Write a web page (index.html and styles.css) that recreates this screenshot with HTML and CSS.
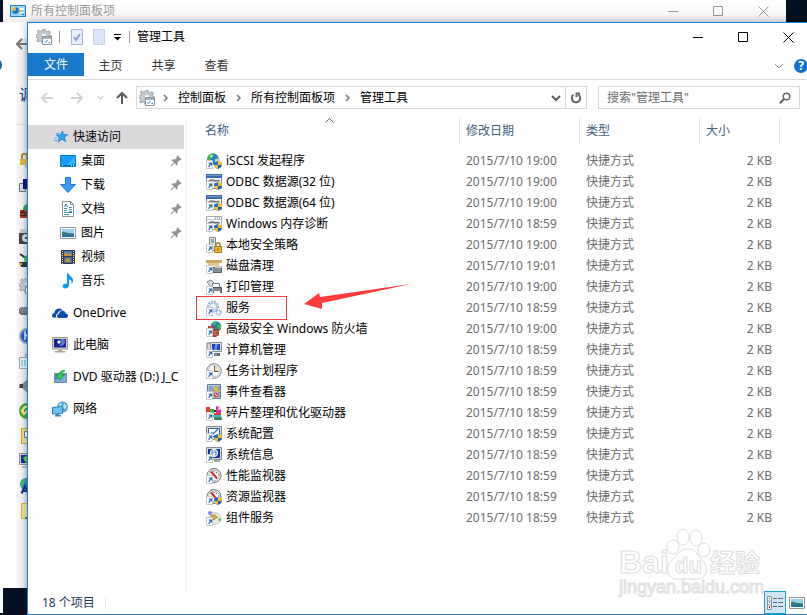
FILE: index.html
```
<!DOCTYPE html>
<html lang="zh-CN">
<head>
    <meta charset="UTF-8">
    <title>管理工具</title>
    <link rel="stylesheet" href="styles.css">
</head>
<body>
<svg class="symbols" aria-hidden="true">
    <!-- overlays -->
    <symbol id="link" viewBox="0 0 16 16">
        <path d="M.5 7.500h6v8h-6z" fill="#fff" stroke="#c4c8cc"/>
        <path d="M2.500 9.500H6V13l-1.200-1.200-1.600 2.400-1-.7 1.600-2.500z" fill="#2a6cb8"/>
    </symbol>
    <symbol id="shield" viewBox="0 0 16 16">
        <path d="M8 9.500 12 8v8C9.500 15 8 13.500 8 11z" fill="#2a72c8"/>
        <path d="M12 8l4 1.500V12h-4z" fill="#f3bd2c"/>
        <path d="M8.100 12H12v4C10 15.200 8.500 14 8.100 12z" fill="#f3bd2c"/>
        <path d="M12 12h3.900c-.4 2-1.900 3.200-3.900 4z" fill="#1f5da8"/>
    </symbol>
    <!-- window icons -->
    <symbol id="tools" viewBox="0 0 16 16">
        <path d="M7 0h2l.5 2.400 1.500.7 2-1.500 1.500 1.500-1.300 2L13.800 6.500 16 7v2H9v5l-3 .5-.5-2-1.500-.7-2 1.300L.7 11.700 2 9.700 1.500 8.500-.5 8V6l2.300-.5.7-1.300L1.200 2.200 2.700.9l2 1.300 1.600-.6z" fill="#c3cad0" stroke="#8c959c" stroke-width=".8"/>
        <circle cx="8" cy="7" r="2" fill="#fff"/>
        <path d="M6.500 7.500h9v8h-9z" fill="#fff" stroke="#8b959d"/>
        <path d="M7 8h8v2H7z" fill="#aab3ba"/>
        <path d="M8.500 12.500l1 1 2-2.500M12.500 13.500h1.500" fill="none" stroke="#2c8fe0"/>
    </symbol>
    <symbol id="panel" viewBox="0 0 16 16">
        <path d="M.5 2.500h15v11H.5z" fill="#9bd6f8" stroke="#1b80bc"/>
        <circle cx="5.500" cy="7.500" r="3.500" fill="#fff"/>
        <path d="M5.500 7.500V4a3.500 3.500 0 1 1-3.500 3.500z" fill="#1a78c4"/>
        <path d="M5.500 7.500V4A3.500 3.500 0 0 0 2 7.500z" fill="#f4a21d"/>
        <path d="M10 5h4v2h-4zM10 9h4v1h-4z" fill="#fff"/>
        <path d="M10 7h2v2h-2z" fill="#f4a21d"/>
        <path d="M12 11h2v1h-2zM3 12h5" fill="#1b80bc"/>
    </symbol>
    <!-- navigation -->
    <symbol id="star" viewBox="0 0 16 16">
        <path d="M9.500 2l1.200 3.700 4 .1-3.200 2.500 1 4.200-3.500-2.300L5 13l1.300-4.500L3.500 6l4-.3z" fill="#2da7f2" stroke="#1b7dcb" stroke-width=".8"/>
        <path d="M3 4.500h3M1.500 9h3M1 11.500h3" stroke="#4fa7e8"/>
    </symbol>
    <symbol id="desktop" viewBox="0 0 16 16">
        <path d="M.5 2.500h15v11H.5z" fill="#10a0fa" stroke="#0c7cd2"/>
        <path d="M15 3v7L6 13z" fill="#37b3ff"/>
        <path d="M1 12h14v1H1z" fill="#0863b4"/>
        <path d="M2 12h1v1H2zM11 12h1v1h-1zM13 12h1v1h-1z" fill="#fff"/>
    </symbol>
    <symbol id="download" viewBox="0 0 16 16">
        <path d="M5.500.5h5v7h5L8 15.500.5 7.500h5z" fill="#3b9af0" stroke="#2379cf"/>
    </symbol>
    <symbol id="document" viewBox="0 0 16 16">
        <path d="M2.500.5h8l3 3v12h-11z" fill="#fff" stroke="#8a9299"/>
        <path d="M10.500.5v3h3" fill="none" stroke="#8a9299"/>
        <path d="M4 7.500h3M4 9.500h3M4 11.500h8M4 13.500h5M9 6.500h3M9 8.500h3M9 10.500h3" stroke="#3c94cf"/>
        <path d="M4.500 6L6 3l1.500 3" fill="none" stroke="#2a7fc0"/>
    </symbol>
    <symbol id="picture" viewBox="0 0 16 16">
        <path d="M.5 2.500h15v11H.5z" fill="#fff" stroke="#8f979e"/>
        <path d="M2 4h12v8H2z" fill="#9dd0ef"/>
        <path d="M2 7c3-1 4 1 7 1s4 1 5 0v4H2z" fill="#3a7d78"/>
        <path d="M2 10l12-1v3H2z" fill="#2c6fa8"/>
    </symbol>
    <symbol id="video" viewBox="0 0 16 16">
        <path d="M1 1h14v14H1z" fill="#36393d"/>
        <path d="M2.500 2v13M13.500 2v13" stroke="#e8e8e8" stroke-dasharray="1 1"/>
        <path d="M4 2h8v5H4z" fill="#3d7ec4"/>
        <path d="M4 8h8v6H4z" fill="#3a6cb0"/>
        <path d="M4 5l2-2 2 2 2-1 2 3H4zM5 10l4-1 2 4H5z" fill="#c89334"/>
    </symbol>
    <symbol id="music" viewBox="0 0 16 16">
        <path d="M7 .5h2c0 3 4 3.500 4 7 0 1.500-.6 2.500-1.500 3.500.8-3-.5-4-2.500-4.500V12c0 2-1.500 3.500-3.500 3.500S2.500 14.500 2.500 13 4 10.500 7 10.500z" fill="#0e9bf5"/>
    </symbol>
    <symbol id="onedrive" viewBox="0 0 16 16">
        <path d="M4.500 12.500C1 13 0 12 0 10.500S1 8 2.500 8c0-3 2-4.500 4.500-4.500 1.700 0 3 .8 3.800 2C7 5 6 7 5.800 8.300 4 9 3.500 10.700 4.500 12.500z" fill="#0c4ca8"/>
        <path d="M5 11c0-1.300 1-2.200 2-2.300.3-2 1.700-3 3.500-3 1.700 0 2.900 1.100 3.200 2.700 1.500.1 2.300 1 2.300 2.300S15 13 13.800 13H7c-1.300 0-2-.9-2-2z" fill="#0c4cb2"/>
    </symbol>
    <symbol id="pc" viewBox="0 0 16 16">
        <path d="M.5.500h15v11.500H.5z" fill="#d9d6cf" stroke="#99968f"/>
        <path d="M2 2h12v8.500H2z" fill="#101c93"/>
        <path d="M8 2h4c2 2 1 6-2 7H6c4-1 4-5 2-7z" fill="#5878dc"/>
        <circle cx="7" cy="5" r="1.700" fill="#e8efff"/>
        <path d="M6 12.500h4V14h3v1.500H3V14h3z" fill="#aaa69e"/>
    </symbol>
    <symbol id="dvd" viewBox="0 0 16 16">
        <path d="M2.500 4.500h12v9h-12z" fill="#4a8ccd" stroke="#7b8b9a"/>
        <path d="M3 11l11-5v7H3z" fill="#78afdf"/>
        <path d="M12.500 1.500C9 1.500 7 3 6.500 6H4l4 5 4-5H9.500c0-2 1-3 3-3.500z" fill="#2ed651" stroke="#139332" stroke-width=".7"/>
    </symbol>
    <symbol id="network" viewBox="0 0 16 16">
        <circle cx="10.500" cy="6" r="5.500" fill="#4d9fd4"/>
        <path d="M7 3c2-2 3-1 3 1L7 6zM12 2l3 3-2 4-2-3z" fill="#b8def2"/>
        <path d="M.5 6.500l10-1v7l-10 .5z" fill="#68c3f4" stroke="#2e81b7"/>
        <path d="M4 13h3v1h2v1.500H3V14h1z" fill="#3a88b8"/>
    </symbol>
    <symbol id="pin" viewBox="0 0 12 12">
        <path d="M7.500.5l4 4-1 1-1-.3-2 2 .3 2.300-1 1L4.500 8.200 1.200 11.500.5 10.800 3.800 7.500 1.500 5.200l1-1 2.300.3 2-2-.3-1z" fill="#8a979f"/>
    </symbol>
    <!-- files -->
    <symbol id="iscsi" viewBox="0 0 16 16">
        <circle cx="7" cy="6" r="5.700" fill="#267fc4"/>
        <path d="M3 2c3-2 5-1 5 1L5 6l-3 3C.5 6 1 4 3 2zM10 4l2 1-1 4-3 1z" fill="#43b651"/>
        <path d="M4 2.500l2-1 1 2-2 1.500z" fill="#c5f3cf"/>
        <path d="M9 6h5v3H9z" fill="#c8d0d6"/>
        <use href="#link"/><use href="#shield"/>
    </symbol>
    <symbol id="odbc" viewBox="0 0 16 16">
        <path d="M.5.5h15v14H.5z" fill="#f4f5f5" stroke="#7b8798"/>
        <path d="M0 0h16v4H0z" fill="#3c68ae"/>
        <path d="M1 1h14v1H1z" fill="#7498cf"/>
        <path d="M2.500 7.500C4 6 6 5.500 8 6.500s4-1 5.500 1" fill="none" stroke="#6d7277" stroke-width="1.500"/>
        <use href="#link"/><use href="#shield"/>
    </symbol>
    <symbol id="memory" viewBox="0 0 16 16">
        <path d="M.5.5h15v13H.5z" fill="#fbfbfb" stroke="#a9adb1"/>
        <path d="M1 3.500h14" stroke="#c3c8ce"/>
        <path d="M9 2h1M11 2h1M13 2h1" stroke="#3b78bd"/>
        <path d="M2.500 7.500C4 6 6 5.500 8 6.500s4-1 5.500 1" fill="none" stroke="#5d6267" stroke-width="1.500"/>
        <use href="#link"/><use href="#shield"/>
    </symbol>
    <symbol id="policy" viewBox="0 0 16 16">
        <path d="M3.500.5h6v13h-6z" fill="#dde2e6" stroke="#7c868e"/>
        <path d="M5 3h3M5 5h3" stroke="#596269"/>
        <path d="M10 10V8c0-3 4-3 4 0v2" fill="none" stroke="#9a8a4b" stroke-width="1.500"/>
        <path d="M8.500 9.500h7v6h-7z" fill="#e9b83c" stroke="#a57a14"/>
        <path d="M12 11v3" stroke="#7e5c0e"/>
        <use href="#link"/>
    </symbol>
    <symbol id="cleanup" viewBox="0 0 16 16">
        <path d="M0 2h16v3H0z" fill="#c9ab67"/>
        <path d="M2 5h11v3H2z" fill="#e0c88f"/>
        <path d="M5 9.500h10.500v5H5z" fill="#888f94" stroke="#555b60"/>
        <path d="M9 8h7v2H9z" fill="#c3c8cb"/>
        <path d="M13 12h1v1h-1z" fill="#4be05c"/>
        <use href="#link"/>
    </symbol>
    <symbol id="print" viewBox="0 0 16 16">
        <path d="M1 3l4-2 4 4-4 3z" fill="#d9dde0" stroke="#7a8186"/>
        <path d="M6.500 4.500h7v4h-7z" fill="#fff" stroke="#777d82"/>
        <path d="M4.500 8.500h11v5h-11z" fill="#7f868c" stroke="#4b5055"/>
        <path d="M8 12h6v3H8z" fill="#f1f2f3"/>
        <use href="#link"/>
    </symbol>
    <symbol id="gears" viewBox="0 0 16 16">
        <circle cx="7" cy="6.500" r="5" fill="#eef5fa" stroke="#9db7c9" stroke-width="2" stroke-dasharray="2 1"/>
        <circle cx="7" cy="6.500" r="3.500" fill="none" stroke="#a5c4d9"/>
        <circle cx="12.500" cy="12.500" r="2.500" fill="#e4f2fb" stroke="#64a1c9" stroke-width="1.500" stroke-dasharray="1 1"/>
        <use href="#link"/>
    </symbol>
    <symbol id="firewall" viewBox="0 0 16 16">
        <circle cx="10" cy="5.500" r="5.300" fill="#287ac0"/>
        <path d="M7 1c3-1 4 0 3 2L7 5zM11 4l4-1v4l-3 2z" fill="#46b554"/>
        <path d="M2 5h6v3h5v6l-3 2H2z" fill="#a5432c"/>
        <path d="M2 7.500h6M2 10.500h11M8 13.500h4M5 5v2M9 11v3" stroke="#d99076" stroke-width=".7"/>
        <use href="#link"/>
    </symbol>
    <symbol id="computer" viewBox="0 0 16 16">
        <path d="M1 1h4v9H1z" fill="#d4d8db" stroke="#7c858d"/>
        <path d="M4.500.5h11v9h-11z" fill="#dce0e2" stroke="#858e95"/>
        <path d="M6 2h8v6H6z" fill="#1c3fb5"/>
        <path d="M9 2h3l-1 6H8z" fill="#6188e4"/>
        <path d="M8 11h6v3H8z" fill="#606970"/>
        <path d="M10 10v5" stroke="#c7ccd0"/>
        <use href="#link"/>
    </symbol>
    <symbol id="clock" viewBox="0 0 16 16">
        <circle cx="8" cy="8" r="7.300" fill="#e9eef2" stroke="#858d94"/>
        <circle cx="8" cy="8" r="5.700" fill="#fff" stroke="#c6ced4"/>
        <path d="M8 8V2.500A5.500 5.500 0 0 1 13.500 8z" fill="#f4dda2"/>
        <path d="M8.500 3v5.500h4" fill="none" stroke="#4c5a66"/>
        <use href="#link"/>
    </symbol>
    <symbol id="events" viewBox="0 0 16 16">
        <path d="M1.500.5h13v14h-13z" fill="#b6c9df" stroke="#5f7ba3"/>
        <path d="M3 3h4M3 5h4M3 7h4M12 3h2M12 5h2M12 9h2M12 12h2" stroke="#5279ad"/>
        <path d="M10 2l3 5H7z" fill="#f5c832" stroke="#a78113" stroke-width=".7"/>
        <circle cx="10" cy="11" r="2.500" fill="#df4a4a"/>
        <path d="M9 10l2 2" stroke="#fff"/>
        <use href="#link"/>
    </symbol>
    <symbol id="defrag" viewBox="0 0 16 16">
        <path d="M0 2h4v5H0z" fill="#d74545"/>
        <path d="M4 4h4v4H4z" fill="#41a94a"/>
        <path d="M8 5h4v2H8z" fill="#37312f"/>
        <path d="M10 1l3 1-1 3 3-1v4h-5z" fill="#d631bd"/>
        <path d="M8 8h7v2H8z" fill="#d9433b"/>
        <path d="M7 10h8v2H7z" fill="#3caed1"/>
        <path d="M8 12h8v3H8z" fill="#39a946"/>
        <path d="M9 14h6" stroke="#5d35a3"/>
        <use href="#link"/>
    </symbol>
    <symbol id="config" viewBox="0 0 16 16">
        <path d="M.5.500h15v13H.5z" fill="#d9dcdf" stroke="#858b91"/>
        <path d="M2.500 2.500h11v8h-11z" fill="#fff" stroke="#3157a7"/>
        <path d="M5 6l2 2 5-5" fill="none" stroke="#3a80d0" stroke-width="1.500"/>
        <use href="#link"/><use href="#shield"/>
    </symbol>
    <symbol id="info" viewBox="0 0 16 16">
        <path d="M.5.500h15v12H.5z" fill="#d9dcdf" stroke="#858b91"/>
        <path d="M2 2h12v9H2z" fill="#19349d"/>
        <circle cx="8" cy="6" r="3.700" fill="#7da7ea" stroke="#fff"/>
        <path d="M8 3.500v1M8 5.500v3.500" stroke="#fff" stroke-width="1.500"/>
        <path d="M8 13h6v2H8z" fill="#a6abaf"/>
        <use href="#link"/>
    </symbol>
    <symbol id="gauge" viewBox="0 0 16 16">
        <circle cx="8" cy="7.500" r="7" fill="#e6e6e6" stroke="#777"/>
        <circle cx="8" cy="7.500" r="5.200" fill="#fff" stroke="#bbb"/>
        <path d="M5 3.500l6 7" stroke="#d32b2b" stroke-width="2"/>
        <path d="M8 3v1M12 7h1M11 4l-1 1" stroke="#666"/>
        <use href="#link"/>
    </symbol>
    <symbol id="component" viewBox="0 0 16 16">
        <path d="M4 4c4-3 11-1 11 5 0 4-5 6-10 5z" fill="#e7e9e7" stroke="#c3c9c6"/>
        <circle cx="4" cy="3" r="2" fill="#8b82dc"/>
        <circle cx="13.500" cy="9.500" r="1.500" fill="#6bbf5e"/>
        <path d="M5 6c2-2 6-1 6 2H9L8 10 6 9z" fill="#e2b02c" stroke="#846d23" stroke-width=".7"/>
        <use href="#link"/>
    </symbol>
    <!-- chrome glyphs -->
    <symbol id="min" viewBox="0 0 11 11"><path d="M0 5.500h10" stroke="currentColor"/></symbol>
    <symbol id="max" viewBox="0 0 11 11"><path d="M.5.500h9v9h-9z" fill="none" stroke="currentColor"/></symbol>
    <symbol id="close" viewBox="0 0 11 11"><path d="M.5.500l10 10M10.500.5l-10 10" stroke="currentColor"/></symbol>
    <symbol id="arrow" viewBox="0 0 12 12"><path d="M12 6H1M6 1L1 6l5 5" fill="none" stroke="currentColor" stroke-width="2"/></symbol>
    <symbol id="chev" viewBox="0 0 10 10"><path d="M1 3l4 4 4-4" fill="none" stroke="currentColor" stroke-width="2"/></symbol>
    <symbol id="sep" viewBox="0 0 6 10"><path d="M1 2l3 3-3 3" fill="none" stroke="#767676" stroke-width="1.500"/></symbol>
</svg>

<div class="desktop">
    <div class="far-window"><i></i></div>

    <!-- 所有控制面板项 -->
    <div class="back-window">
        <div class="back-title">
            <svg class="icon"><use href="#panel"/></svg>
            <span>所有控制面板项</span>
            <div class="captions">
                <button aria-label="最小化"><svg><use href="#min"/></svg></button>
                <button aria-label="最大化"><svg><use href="#max"/></svg></button>
                <button aria-label="关闭"><svg><use href="#close"/></svg></button>
            </div>
        </div>
        <div class="back-side">
            <svg class="back-arrow"><use href="#arrow"/></svg>
            <div class="adjust">调</div>
            <div class="back-icons">
                <svg viewBox="0 0 16 16"><path d="M3 6V3c0-3 5-3 5 0v3" fill="none" stroke="#a58a38" stroke-width="2"/><path d="M1 6h9v6H1z" fill="#e2b643"/><circle cx="9" cy="12" r="3" fill="#b3b9be"/></svg>
                <svg viewBox="0 0 16 16"><path d="M.5 5.500h6v8h-6z" fill="#d7dade" stroke="#6c737a"/><path d="M4 1h12v10H4z" fill="#10178e"/></svg>
                <svg viewBox="0 0 16 16"><circle cx="9" cy="6" r="5" fill="#33a35c"/><path d="M1 7h12v8H1z" fill="#a4412d"/><path d="M1 9.500h12M1 12.500h12M4 7v2M6 10v2" stroke="#5d1f16"/></svg>
                <svg viewBox="0 0 16 16"><path d="M1 1h14v4H1z" fill="#c5c9ca"/><path d="M0 5h16v11H0z" fill="#414748"/><circle cx="7" cy="10" r="4" fill="#d5dbdc"/><circle cx="7" cy="10" r="1" fill="#222"/></svg>
                <svg viewBox="0 0 16 16"><path d="M1 1l7 5" stroke="#333" stroke-width="2"/><circle cx="9" cy="6" r="4" fill="#48b857"/><path d="M0 9h10v5H2z" fill="#313a36"/><path d="M0 11h3" stroke="#d8b33c" stroke-width="2"/></svg>
                <svg viewBox="0 0 16 16"><use href="#tools"/></svg>
                <svg viewBox="0 0 16 16"><path d="M2 4h14v8H2L0 10V6z" fill="#6b727d"/><path d="M2 5h12M1 7h12M2 9h12" stroke="#b9bec8" stroke-dasharray="1 1"/></svg>
                <svg viewBox="0 0 16 16"><circle cx="8" cy="8" r="7" fill="#2b58b7" stroke="#8ea4cc" stroke-width="2"/><path d="M5 5l5 5M6 3v9" stroke="#dbe7fc" stroke-width="1.500"/></svg>
                <svg viewBox="0 0 16 16"><path d="M.5 4.500h15v11H.5z" fill="#e6f4fb" stroke="#93a7b4"/><path d="M2 8h12M2 10h12M2 12h12" stroke="#59a9cb" stroke-dasharray="2 1"/><path d="M6 1l5-1v5H6z" fill="#a6b2ba"/></svg>
                <svg viewBox="0 0 16 16"><path d="M0 6h3l7-6v16l-7-6H0z" fill="#8a9095"/><path d="M1 6h3v4H1z" fill="#3f4448"/></svg>
                <svg viewBox="0 0 16 16"><circle cx="8" cy="8" r="8" fill="#4aa62d"/><path d="M4 9c-1-5 4-7 7-4M2 7l3 4 3-3" fill="none" stroke="#f7e88b" stroke-width="2"/></svg>
                <svg viewBox="0 0 16 16"><path d="M2.500.5h13v15h-13z" fill="#f4dc8d" stroke="#d4a62c"/><path d="M5.500 3.500h6v6h-6z" fill="#fff" stroke="#667888"/></svg>
                <svg viewBox="0 0 16 16"><path d="M.5.500h15v11H.5z" fill="#d0d2d5" stroke="#8c9096"/><path d="M2 2h12v8H2z" fill="#102ba7"/><path d="M4 5c2-3 5-2 6 1l-3 4z" fill="#65d33a"/><path d="M3 13h9v2H3z" fill="#b6b9bd"/></svg>
                <svg viewBox="0 0 16 16"><circle cx="7" cy="6" r="6" fill="#3d8cc9"/><path d="M2 2l4-1-1 5-3 3z" fill="#4abb58"/><path d="M2.500 15.500L6 8l3 7.500M4 13h4" fill="none" stroke="#17308a" stroke-width="2"/></svg>
                <svg viewBox="0 0 16 16"><path d="M2.500.5h13v15h-13z" fill="#f7e197" stroke="#e2b42e"/><path d="M6 14h3v2H6z" fill="#2f87b2"/></svg>
            </div>
        </div>
    </div>

    <!-- 管理工具 -->
    <div class="window">
        <div class="title-bar">
            <svg class="icon"><use href="#tools"/></svg>
            <span class="bar"></span>
            <button class="quick" aria-label="属性"><svg viewBox="0 0 12 16"><path d="M.5.500h11v15H.5z" fill="#eaf0fb" stroke="#a9b6d3"/><path d="M3 8l2 3 4-6" fill="none" stroke="#8aa0cd" stroke-width="2"/></svg></button>
            <button class="quick" aria-label="新建文件夹"><svg viewBox="0 0 12 16"><path d="M.5.500h11v15H.5z" fill="#dbe5f7" stroke="#c9d6ee"/><path d="M9.500 10.500h2v5h-2z" fill="#eaf0fb" stroke="#c9d6ee"/></svg></button>
            <button class="more" aria-label="自定义快速访问工具栏"><svg viewBox="0 0 7 7"><path d="M0 .5h7" stroke="#000"/><path d="M0 3h7L3.500 6.500z"/></svg></button>
            <span class="bar"></span>
            <span class="title">管理工具</span>
            <div class="captions">
                <button aria-label="最小化"><svg><use href="#min"/></svg></button>
                <button aria-label="最大化"><svg><use href="#max"/></svg></button>
                <button aria-label="关闭"><svg><use href="#close"/></svg></button>
            </div>
        </div>

        <div class="tabs">
            <button class="file">文件</button>
            <button>主页</button>
            <button>共享</button>
            <button>查看</button>
            <div class="ribbon-end">
                <svg class="expand" viewBox="0 0 10 10"><path d="M1 3l4 4 4-4" fill="none" stroke="currentColor"/></svg>
                <span class="help">?</span>
            </div>
        </div>

        <div class="toolbar">
            <button class="step dim" aria-label="后退"><svg><use href="#arrow"/></svg></button>
            <button class="step dim next" aria-label="前进"><svg><use href="#arrow"/></svg></button>
            <button class="recent dim" aria-label="最近浏览的位置"><svg><use href="#chev"/></svg></button>
            <button class="step up" aria-label="上移"><svg><use href="#arrow"/></svg></button>
            <div class="address">
                <svg class="icon"><use href="#tools"/></svg>
                <svg class="sep"><use href="#sep"/></svg>
                <a href="#">控制面板</a>
                <svg class="sep"><use href="#sep"/></svg>
                <a href="#">所有控制面板项</a>
                <svg class="sep"><use href="#sep"/></svg>
                <a href="#">管理工具</a>
                <button class="history" aria-label="以前的位置"><svg><use href="#chev"/></svg></button>
                <button class="refresh" aria-label="刷新"><svg viewBox="0 0 12 12"><path d="M8.500 2.800A4.200 4.200 0 1 1 3.500 2.800M2 1.500h3.500V5" fill="none" stroke="#666" stroke-width="2"/></svg></button>
            </div>
            <div class="search">
                <input type="text" aria-label="搜索" placeholder='搜索"管理工具"'>
                <svg viewBox="0 0 12 12"><circle cx="7.500" cy="4.500" r="3.300" fill="none" stroke="#666" stroke-width="1.500"/><path d="M5 7L.8 11.200" stroke="#666" stroke-width="2"/></svg>
            </div>
        </div>

        <div class="content">
            <nav>
                <a href="#" class="root selected"><svg class="icon"><use href="#star"/></svg>快速访问</a>
                <a href="#" class="child"><svg class="icon"><use href="#desktop"/></svg>桌面<svg class="pin"><use href="#pin"/></svg></a>
                <a href="#" class="child"><svg class="icon"><use href="#download"/></svg>下载<svg class="pin"><use href="#pin"/></svg></a>
                <a href="#" class="child"><svg class="icon"><use href="#document"/></svg>文档<svg class="pin"><use href="#pin"/></svg></a>
                <a href="#" class="child"><svg class="icon"><use href="#picture"/></svg>图片<svg class="pin"><use href="#pin"/></svg></a>
                <a href="#" class="child"><svg class="icon"><use href="#video"/></svg>视频</a>
                <a href="#" class="child"><svg class="icon"><use href="#music"/></svg>音乐</a>
                <a href="#" class="root"><svg class="icon"><use href="#onedrive"/></svg>OneDrive</a>
                <a href="#" class="root"><svg class="icon"><use href="#pc"/></svg>此电脑</a>
                <a href="#" class="root"><svg class="icon"><use href="#dvd"/></svg>DVD 驱动器 (D:) J_C</a>
                <a href="#" class="root"><svg class="icon"><use href="#network"/></svg>网络</a>
            </nav>

            <div class="files">
                <table>
                    <thead>
                    <tr>
                        <th class="name"><div>名称<svg class="sort" viewBox="0 0 9 5"><path d="M.5 4.500l4-4 4 4" fill="none" stroke="#666"/></svg></div></th>
                        <th class="date"><div>修改日期</div></th>
                        <th class="type"><div>类型</div></th>
                        <th class="size"><div>大小</div></th>
                    </tr>
                    </thead>
                    <tbody>
                    <tr><td><svg class="icon"><use href="#iscsi"/></svg>iSCSI 发起程序</td><td>2015/7/10 19:00</td><td>快捷方式</td><td>2 KB</td></tr>
                    <tr><td><svg class="icon"><use href="#odbc"/></svg>ODBC 数据源(32 位)</td><td>2015/7/10 19:00</td><td>快捷方式</td><td>2 KB</td></tr>
                    <tr><td><svg class="icon"><use href="#odbc"/></svg>ODBC 数据源(64 位)</td><td>2015/7/10 19:00</td><td>快捷方式</td><td>2 KB</td></tr>
                    <tr><td><svg class="icon"><use href="#memory"/></svg>Windows 内存诊断</td><td>2015/7/10 18:59</td><td>快捷方式</td><td>2 KB</td></tr>
                    <tr><td><svg class="icon"><use href="#policy"/></svg>本地安全策略</td><td>2015/7/10 19:00</td><td>快捷方式</td><td>2 KB</td></tr>
                    <tr><td><svg class="icon"><use href="#cleanup"/></svg>磁盘清理</td><td>2015/7/10 19:01</td><td>快捷方式</td><td>2 KB</td></tr>
                    <tr><td><svg class="icon"><use href="#print"/></svg>打印管理</td><td>2015/7/10 19:00</td><td>快捷方式</td><td>2 KB</td></tr>
                    <tr><td class="marked"><svg class="icon"><use href="#gears"/></svg>服务<span class="mark-box"></span><svg class="mark-arrow" viewBox="0 0 108 26"><path d="M0 20L15 9l1 4L107 0 18 19v6z" fill="#ff3b3b"/></svg></td><td>2015/7/10 18:59</td><td>快捷方式</td><td>2 KB</td></tr>
                    <tr><td><svg class="icon"><use href="#firewall"/></svg>高级安全 Windows 防火墙</td><td>2015/7/10 19:00</td><td>快捷方式</td><td>2 KB</td></tr>
                    <tr><td><svg class="icon"><use href="#computer"/></svg>计算机管理</td><td>2015/7/10 18:59</td><td>快捷方式</td><td>2 KB</td></tr>
                    <tr><td><svg class="icon"><use href="#clock"/></svg>任务计划程序</td><td>2015/7/10 18:59</td><td>快捷方式</td><td>2 KB</td></tr>
                    <tr><td><svg class="icon"><use href="#events"/></svg>事件查看器</td><td>2015/7/10 18:59</td><td>快捷方式</td><td>2 KB</td></tr>
                    <tr><td><svg class="icon"><use href="#defrag"/></svg>碎片整理和优化驱动器</td><td>2015/7/10 18:59</td><td>快捷方式</td><td>2 KB</td></tr>
                    <tr><td><svg class="icon"><use href="#config"/></svg>系统配置</td><td>2015/7/10 18:59</td><td>快捷方式</td><td>2 KB</td></tr>
                    <tr><td><svg class="icon"><use href="#info"/></svg>系统信息</td><td>2015/7/10 18:59</td><td>快捷方式</td><td>2 KB</td></tr>
                    <tr><td><svg class="icon"><use href="#gauge"/></svg>性能监视器</td><td>2015/7/10 18:59</td><td>快捷方式</td><td>2 KB</td></tr>
                    <tr><td><svg class="icon" viewBox="0 0 16 16"><use href="#gauge"/><use href="#shield"/></svg>资源监视器</td><td>2015/7/10 18:59</td><td>快捷方式</td><td>2 KB</td></tr>
                    <tr><td><svg class="icon"><use href="#component"/></svg>组件服务</td><td>2015/7/10 18:59</td><td>快捷方式</td><td>2 KB</td></tr>
                    </tbody>
                </table>
            </div>
        </div>

        <div class="status">
            <span class="count">18 个项目</span>
            <div class="views">
                <button class="on" aria-label="详细信息"><svg viewBox="0 0 16 14"><path d="M.5.500h4v13h-4zM.5 5h4M.5 9h4" fill="#fff" stroke="#8b9298"/><path d="M2 2h1v1H2z" fill="#2b9b46"/><path d="M2 6h1v1H2z" fill="#2b76d2"/><path d="M2 10h1v2H2z" fill="#d22"/><path d="M6 2.500h4M11 2.500h5M6 6.500h4M11 6.500h5M6 10.500h4M11 10.500h5" stroke="#5c666e"/></svg></button>
                <button aria-label="大图标"><svg viewBox="0 1 16 14"><use href="#picture" width="16" height="16"/></svg></button>
            </div>
        </div>
    </div>

    <!-- watermark -->
    <svg class="watermark" viewBox="0 0 148 74">
        <text class="big" x="1" y="45">Bai</text>
        <g class="paw">
            <ellipse cx="55" cy="19" rx="6" ry="7"/>
            <ellipse cx="65" cy="9" rx="6" ry="8"/>
            <ellipse cx="78" cy="10" rx="6" ry="8"/>
            <ellipse cx="86" cy="22" rx="6" ry="7"/>
            <path d="M70 21c9 0 9 7 14 11 6 5 7 18-4 19-7 1-13-1-20 0-11 1-13-12-7-18 6-5 8-12 17-12z"/>
        </g>
        <text class="du" x="57" y="45">du</text>
        <text class="cjk" x="92" y="44">经验</text>
        <text class="url" x="1" y="65">jingyan.baidu.com</text>
    </svg>
</div>
</body>
</html>
```
FILE: styles.css
```
* {
    box-sizing: border-box;
    margin: 0;
    padding: 0;
}
body {
    font: 12px/20px "Noto Sans", "Noto Sans CJK SC", sans-serif;
    color: #000;
    background: #04101f;
}
button {
    display: flex;
    align-items: center;
    justify-content: center;
    border: 0;
    background: none;
    font: inherit;
    color: inherit;
}
a {
    color: inherit;
    text-decoration: none;
}
.symbols {
    position: absolute;
    width: 0;
    height: 0;
}
.icon {
    flex: none;
    width: 16px;
    height: 16px;
}
.desktop {
    position: relative;
    min-height: 100vh;
    padding: 22px 0 0 27px;
    overflow: hidden;
    display: flex;
}

/* windows behind */
.far-window {
    position: absolute;
    left: 0;
    top: 22px;
    bottom: 2px;
    width: 3px;
    background: #fff;
    overflow: hidden;
}
.far-window i {
    display: block;
    width: 14px;
    height: 14px;
    margin: 36px 0 0 -12px;
    border-radius: 7px;
    background: #1566b0;
}
.back-window {
    position: absolute;
    left: 3px;
    right: 21px;
    top: 0;
    bottom: 27px;
    background: #fff;
    overflow: hidden;
}
.back-title {
    display: flex;
    align-items: center;
    height: 22px;
    padding-left: 7px;
    color: #999;
    background: linear-gradient(#fff 20%, #f2eff3);
}
.back-title span {
    margin-left: 5px;
}
.back-side {
    width: 24px;
    height: 100%;
    padding-left: 13px;
    background: linear-gradient(90deg, #fff 13px, #f7f5f8 14px, #f2f2f4 20px, #dcdcdf);
}
.back-arrow {
    display: block;
    width: 12px;
    height: 12px;
    margin-top: 16px;
    color: #777;
}
.adjust {
    width: 16px;
    height: 20px;
    margin: 34px 0 0 3px;
    font-size: 15px;
    color: #1c3b8e;
}
.back-icons {
    display: flex;
    flex-direction: column;
    gap: 9px;
    margin-top: 20px;
    padding: 28px 0 0 3px;
    border-top: 1px solid #dfe3ea;
}
.back-icons svg {
    width: 16px;
    height: 16px;
}

.captions {
    display: flex;
    align-self: stretch;
    margin-left: auto;
}
.captions button {
    width: 45px;
}
.captions svg {
    width: 11px;
    height: 11px;
}

/* main window */
.window {
    position: relative;
    flex: 1;
    min-width: 0;
    display: flex;
    flex-direction: column;
    border: 1px solid #1883d7;
    border-right: 0;
    background: #fff;
    overflow: hidden;
    box-shadow: 0 0 8px rgba(0, 0, 0, .3);
}
.title-bar {
    display: flex;
    align-items: center;
    height: 30px;
    padding: 0 0 2px 8px;
}
.title-bar .bar {
    width: 1px;
    height: 12px;
    margin-left: 7px;
    background: #999;
}
.quick {
    width: 12px;
    height: 16px;
    margin-left: 11px;
}
.quick svg {
    width: 12px;
    height: 16px;
}
.quick + .quick {
    margin-left: 10px;
}
.more {
    width: 7px;
    margin: 0 1px 0 9px;
}
.more svg {
    width: 7px;
    height: 7px;
}
.title {
    margin-left: 7px;
}
.title-bar .captions {
    margin-right: -4px;
}

.tabs {
    display: flex;
    height: 27px;
    border-bottom: 1px solid #dadbdc;
    color: #333;
}
.tabs button {
    width: 53px;
    height: 25px;
}
.tabs .file {
    width: 56px;
    height: 23px;
    background: #1979ca;
    color: #fff;
}
.ribbon-end {
    display: flex;
    align-items: center;
    gap: 10px;
    height: 25px;
    margin: 0 -1px 0 auto;
    color: #888;
}
.expand {
    width: 10px;
    height: 10px;
}
.help {
    width: 14px;
    height: 14px;
    border-radius: 7px;
    background: #0f74d1;
    color: #fff;
    font-weight: bold;
    line-height: 14px;
    text-align: center;
}

.toolbar {
    display: flex;
    padding: 6px 7px 8px 4px;
    color: #5c5c5c;
}
.step {
    width: 30px;
}
.step svg {
    width: 12px;
    height: 12px;
}
.dim {
    color: #d4d4d4;
}
.next svg {
    transform: rotate(180deg);
}
.recent {
    width: 16px;
}
.recent svg {
    width: 7px;
    height: 7px;
}
.up {
    width: 28px;
}
.up svg {
    transform: rotate(90deg);
}
.address,
.search {
    display: flex;
    align-items: center;
    height: 23px;
    border: 1px solid #d9d9d9;
}
.address {
    flex: 1;
    min-width: 0;
    padding-left: 2px;
    color: #000;
    white-space: nowrap;
}
.sep {
    width: 6px;
    height: 10px;
    margin: 0 9px 0 10px;
}
.address .icon + .sep {
    margin-left: 8px;
}
.history {
    width: 18px;
    margin-left: auto;
    color: #5c5c5c;
}
.history svg {
    width: 10px;
    height: 10px;
}
.refresh {
    align-self: stretch;
    width: 21px;
    border-left: 1px solid #d9d9d9;
}
.refresh svg {
    width: 12px;
    height: 12px;
    transform: scaleX(-1);
}
.search {
    width: 202px;
    margin-left: 11px;
    padding: 0 8px;
}
.search input {
    flex: 1;
    min-width: 0;
    border: 0;
    outline: 0;
    font: inherit;
}
.search input::placeholder {
    color: #6d6d6d;
}
.search svg {
    width: 12px;
    height: 12px;
}

.content {
    flex: 1;
    display: flex;
}
nav {
    width: 159px;
    padding: 8px 2px 0 0;
    border-right: 1px solid #f0f0f0;
}
nav a {
    display: flex;
    align-items: center;
    height: 24px;
    white-space: nowrap;
    overflow: hidden;
}
nav .root {
    margin-top: 8px;
    padding-left: 24px;
}
nav .root .icon {
    margin-right: 5px;
}
nav .selected {
    margin-top: 0;
    padding-left: 25px;
    background: #dcd9dd;
}
nav .selected .icon {
    margin-right: 4px;
}
nav .child {
    padding-left: 32px;
}
nav .child .icon {
    margin-right: 5px;
}
.pin {
    width: 12px;
    height: 12px;
    margin: 0 2px 0 auto;
}

.files {
    flex: 1;
    min-width: 0;
}
table {
    width: 593px;
    table-layout: fixed;
    border-spacing: 0;
}
th {
    padding-bottom: 6px;
    font-weight: normal;
    text-align: left;
    color: #43607f;
}
th div {
    position: relative;
    height: 27px;
    padding-left: 6px;
    border-right: 1px solid #e5e5e5;
    line-height: 27px;
}
.name {
    width: 273px;
}
.name div {
    padding-left: 18px;
}
.date,
.type {
    width: 120px;
}
.sort {
    position: absolute;
    left: 138px;
    top: 1px;
    width: 9px;
    height: 5px;
}
td {
    height: 21px;
    padding-left: 6px;
    line-height: 21px;
    white-space: nowrap;
    color: #6d6d6d;
}
td:first-child {
    padding-left: 19px;
    color: #000;
}
td:last-child {
    padding-right: 8px;
    text-align: right;
}
td .icon {
    margin-right: 4px;
    vertical-align: -4px;
}
.marked {
    position: relative;
}
.mark-box {
    position: absolute;
    left: 9px;
    top: -1px;
    width: 91px;
    height: 24px;
    border: 1px solid #f53b3b;
}
.mark-arrow {
    position: absolute;
    left: 117px;
    top: -13px;
    width: 108px;
    height: 26px;
}

.status {
    display: flex;
    align-items: center;
    height: 23px;
    padding-left: 14px;
    color: #1e395b;
}
.count {
    padding-right: 10px;
    border-right: 1px solid #e8e8e8;
    line-height: 12px;
}
.views {
    display: flex;
    align-self: stretch;
    margin-left: auto;
}
.views button {
    width: 21px;
}
.views .on {
    width: 22px;
    border: 1px solid #26a0da;
    background: #cde8f4;
}
.views svg {
    width: 16px;
    height: 14px;
}

.watermark {
    position: absolute;
    right: 41px;
    bottom: 13px;
    width: 148px;
    height: 74px;
    fill: #fff;
    stroke: #dedede;
    font-family: "Liberation Sans", "Noto Sans CJK SC", sans-serif;
}
.watermark .big {
    font-size: 32px;
    font-weight: bold;
}
.watermark .du {
    font-size: 22px;
    font-weight: bold;
}
.watermark .cjk {
    font-size: 25px;
    font-weight: bold;
}
.watermark .url {
    font-size: 18px;
}
```
